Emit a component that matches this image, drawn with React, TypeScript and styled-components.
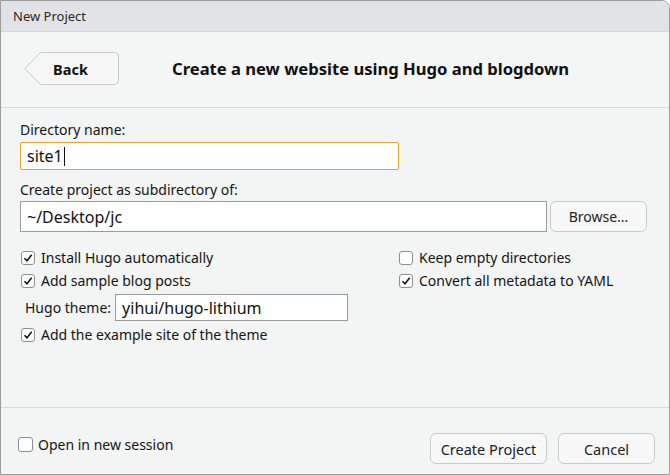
import React from "react";
import styled, { createGlobalStyle } from "styled-components";

const Global = createGlobalStyle`
  html, body { margin: 0; padding: 0; background: #ffffff; }
  body { font-family: "Noto Sans", "Open Sans", sans-serif; }
  * { box-sizing: border-box; }
`;

const Window = styled.div`
  width: 670px;
  height: 475px;
  border: 1px solid #9d9d9d;
  border-top-right-radius: 8px;
  overflow: hidden;
  display: flex;
  flex-direction: column;
  background: #f3f4f4;
  color: #141414;
  font-size: 14px;
`;

const TitleBar = styled.div`
  height: 31px;
  flex: none;
  background: #e2e3e6;
  border-bottom: 1px solid #d3d4d6;
  display: flex;
  align-items: center;
  padding-left: 12px;
  font-size: 13px;
  color: #2a2a2a;
`;

const Header = styled.div`
  height: 76px;
  flex: none;
  border-bottom: 1px solid #d7d8d8;
  background: #f4f5f5;
  display: flex;
  align-items: center;
  padding-left: 23px;
  padding-bottom: 2px;
`;

const BackButton = styled.button`
  position: relative;
  width: 95px;
  height: 33px;
  border: none;
  background: transparent;
  padding: 0;
  font-family: inherit;
  font-weight: 700;
  font-size: 14.5px;
  color: #111;
  display: flex;
  align-items: center;
  justify-content: center;
  padding-right: 2px;
  svg {
    position: absolute;
    left: 0;
    top: 0;
  }
  span {
    position: relative;
  }
`;

const HeaderTitle = styled.h1`
  margin: 0 0 0 53px;
  font-size: 16.6px;
  font-weight: 700;
  color: #111;
`;

const Body = styled.div`
  flex: 1;
  padding: 12px 20px 0 19px;
  display: flex;
  flex-direction: column;
`;

const Label = styled.div<{ $mt?: number }>`
  line-height: 20px;
  margin-top: ${(p) => p.$mt ?? 0}px;
`;

const TextInput = styled.div<{ $w: number; $h: number; $focus?: boolean }>`
  width: ${(p) => p.$w}px;
  height: ${(p) => p.$h}px;
  background: #fff;
  border: 1px solid ${(p) => (p.$focus ? "#e2a42e" : "#9a9a9a")};
  border-radius: ${(p) => (p.$focus ? 2 : 0)}px;
  display: flex;
  align-items: center;
  padding-left: 6px;
  font-size: 16px;
  color: #111;
`;

const Caret = styled.span`
  display: inline-block;
  width: 1px;
  height: 19px;
  background: #111;
  margin-left: 1px;
`;

const PathRow = styled.div`
  display: flex;
  align-items: center;
  gap: 3px;
  margin-top: 1px;
`;

const PushButton = styled.button<{ $w: number; $fs?: number }>`
  width: ${(p) => p.$w}px;
  height: 31px;
  border: 1px solid #c9c9cb;
  border-radius: 6px;
  background: #f7f7f8;
  font-family: inherit;
  font-size: ${(p) => p.$fs ?? 14}px;
  color: #222;
  padding: 0;
`;

const Options = styled.div`
  display: grid;
  grid-template-columns: 378px 1fr;
  margin-top: 14px;
`;

const Column = styled.div`
  display: flex;
  flex-direction: column;
`;

const CheckRow = styled.div`
  display: flex;
  align-items: center;
  height: 23px;
  gap: 6px;
  padding-left: 1px;
`;

const Box = styled.span<{ $size?: number }>`
  width: ${(p) => p.$size ?? 14}px;
  height: ${(p) => p.$size ?? 14}px;
  flex: none;
  border: 1px solid #8f8f8f;
  border-radius: 3px;
  background: #fff;
  display: flex;
  align-items: center;
  justify-content: center;
`;

const ThemeRow = styled.div`
  display: flex;
  align-items: center;
  height: 31px;
  padding-left: 5px;
  gap: 4px;
`;

const Footer = styled.div`
  height: 67px;
  flex: none;
  border-top: 1px solid #d7d8d8;
  display: flex;
  align-items: flex-start;
  padding: 25px 14px 0 16px;
  gap: 11px;
`;

const FooterCheck = styled(CheckRow)`
  gap: 5px;
  margin-top: 0;
`;

const Spacer = styled.div`
  flex: 1;
`;

const Check = ({ checked, size }: { checked?: boolean; size?: number }) => (
  <Box $size={size}>
    {checked && (
      <svg width="10" height="10" viewBox="0 0 10 10">
        <path d="M1.5 5.2 L4 7.8 L8.7 1.8" fill="none" stroke="#111" strokeWidth="1.5" />
      </svg>
    )}
  </Box>
);

const Option = ({ label, checked }: { label: string; checked?: boolean }) => (
  <CheckRow>
    <Check checked={checked} />
    <span>{label}</span>
  </CheckRow>
);

export default function App() {
  return (
    <>
      <Global />
      <Window>
        <TitleBar>New Project</TitleBar>
        <Header>
          <BackButton>
            <svg width="95" height="33" viewBox="0 0 95 33">
              <path
                d="M0.8 16.5 L16.5 0.5 L90.5 0.5 Q94.5 0.5 94.5 4.5 L94.5 28.5 Q94.5 32.5 90.5 32.5 L16.5 32.5 Z"
                fill="#f6f6f7"
                stroke="#c6c6c8"
                strokeWidth="1"
              />
            </svg>
            <span>Back</span>
          </BackButton>
          <HeaderTitle>Create a new website using Hugo and blogdown</HeaderTitle>
        </Header>
        <Body>
          <Label>Directory name:</Label>
          <TextInput $w={379} $h={28} $focus style={{ marginTop: 2 }}>
            site1
            <Caret />
          </TextInput>
          <Label $mt={10}>Create project as subdirectory of:</Label>
          <PathRow>
            <TextInput $w={527} $h={31}>~/Desktop/jc</TextInput>
            <PushButton $w={97}>Browse...</PushButton>
          </PathRow>
          <Options>
            <Column>
              <Option label="Install Hugo automatically" checked />
              <Option label="Add sample blog posts" checked />
              <ThemeRow>
                <span>Hugo theme:</span>
                <TextInput $w={233} $h={27}>yihui/hugo-lithium</TextInput>
              </ThemeRow>
              <Option label="Add the example site of the theme" checked />
            </Column>
            <Column>
              <Option label="Keep empty directories" />
              <Option label="Convert all metadata to YAML" checked />
            </Column>
          </Options>
        </Body>
        <Footer>
          <FooterCheck>
            <Check size={15} />
            <span>Open in new session</span>
          </FooterCheck>
          <Spacer />
          <PushButton $w={117} $fs={14.5}>Create Project</PushButton>
          <PushButton $w={97} $fs={14.5}>Cancel</PushButton>
        </Footer>
      </Window>
    </>
  );
}
